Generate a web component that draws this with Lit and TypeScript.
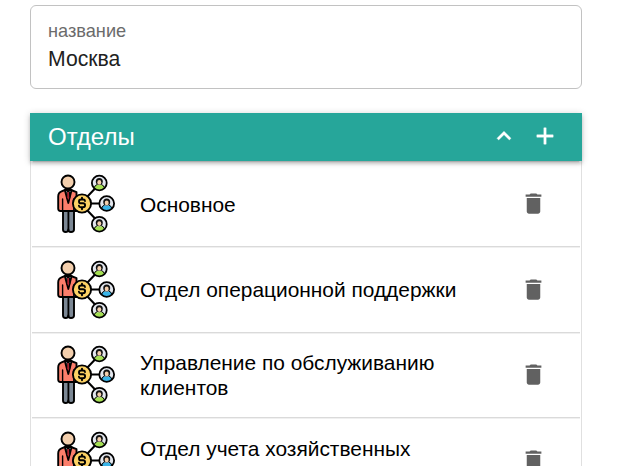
import { LitElement, html, css, svg } from "lit";
import { customElement, property } from "lit/decorators.js";

const contact = (x: number, y: number, shirt: string) => svg`
  <g transform="translate(${x} ${y})">
    <circle r="7.4" fill="#e3e7ee"/>
    <path d="M-5 5.2V4.6C-5 2.8-3.6 2.1-2 2.1H2C3.6 2.1 5 2.8 5 4.6V5.2A7.2 7.2 0 0 1-5 5.2Z" fill="${shirt}"/>
    <path d="M-4.9 4.2Q-4.4 2.2-2.4 1.6M4.9 4.2Q4.4 2.2 2.4 1.6" fill="none" stroke="#000" stroke-width="1"/>
    <circle cy="-1.4" r="3.5" fill="#111"/>
    <ellipse cy="-.6" rx="2" ry="2.4" fill="#f3cfad"/>
    <circle r="7.4" fill="none" stroke="#000" stroke-width="1.8"/>
  </g>`;

@customElement("department-icon")
export class DepartmentIcon extends LitElement {
  static styles = css`
    :host { display: block; width: 60px; height: 60px; }
    svg { display: block; }
  `;
  render() {
    return html`<svg width="60" height="60" viewBox="0 0 60 60" stroke-linejoin="round" stroke-linecap="round">
      <path d="M30 24L40 13.5M30 29.5H44M30 35L40 45.5" stroke="#000" stroke-width="2"/>
      <path d="M7 34H18V55.5Q18 58 15 58Q12.3 58 12.3 55.5Q12.3 58 9.6 58Q7 58 7 55.5Z" fill="#7b8794" stroke="#000" stroke-width="1.9"/>
      <path d="M12.4 38V56" stroke="#000" stroke-width="1.8"/>
      <path d="M9 16L5.5 17.3Q2.2 18.5 2.2 22.5V34.5Q2.2 37 4.5 37H20.5V18.2L15 16Z" fill="#fc7e6b" stroke="#000" stroke-width="1.9"/>
      <path d="M6.6 25V37M17.8 25V37" stroke="#000" stroke-width="1.4"/>
      <path d="M8.8 16H15.6L12.3 29Z" fill="#e7e8ed" stroke="#000" stroke-width="1.8"/>
      <path d="M11.2 17.5H13.4L13.8 24L12.3 27L10.9 24Z" fill="#a8202d" stroke="#000" stroke-width="1"/>
      <circle cx="12" cy="8" r="6.5" fill="#f3cfad" stroke="#000" stroke-width="1.9"/>
      <circle cx="26" cy="29.5" r="9.1" fill="#fdd264" stroke="#000" stroke-width="1.9"/>
      <path d="M29 27Q28.9 25.5 27.3 25.5H25Q23 25.5 23 27.4Q23 29.3 25 29.3H27Q29.1 29.3 29.1 31.3Q29.1 33.3 27 33.3H24.7Q23 33.3 22.9 31.7M26 23.6V25.3M26 33.5V35.2" fill="none" stroke="#000" stroke-width="1.9"/>
      ${contact(43.3, 9, "#a5e052")}
      ${contact(50.7, 29.5, "#39b4e8")}
      ${contact(43.3, 50.2, "#a5e052")}
    </svg>`;
  }
}

@customElement("department-row")
export class DepartmentRow extends LitElement {
  @property() name = "";
  @property({ type: Boolean }) tall = false;
  static styles = css`
    :host {
      display: flex;
      box-sizing: border-box;
      height: 85.5px;
      margin: 0 1px;
      padding: 0 33px 0 24px;
      align-items: center;
      border-bottom: 1px solid #dadada;
      box-shadow: 0 1px #f0f0f0;
    }
    .name {
      flex: 1;
      margin-left: 24px;
      padding: 0.8px 60px 0 0;
      font-size: 20.9px;
      line-height: 25px;
      color: #000;
    }
    :host([tall]) .name { min-height: 50px; }
    department-icon { margin-top: 0.8px; }
    .trash { display: block; fill: #616161; }
  `;
  render() {
    return html`
      <department-icon></department-icon>
      <div class="name">${this.name}</div>
      <svg class="trash" width="27" height="27" viewBox="0 0 24 24">
        <path d="M6 19c0 1.1.9 2 2 2h8c1.1 0 2-.9 2-2V7H6v12zM19 4h-3.5l-1-1h-5l-1 1H5v2h14V4z"/>
      </svg>`;
  }
}

@customElement("app-root")
export class AppRoot extends LitElement {
  private departments = [
    { name: "Основное", tall: false },
    { name: "Отдел операционной поддержки", tall: false },
    { name: "Управление по обслуживанию клиентов", tall: true },
    { name: "Отдел учета хозяйственных", tall: true },
  ];
  static styles = css`
    :host {
      display: block;
      box-sizing: border-box;
      height: 466px;
      padding: 5px 39px 0 30px;
      overflow: hidden;
      background: #fff;
      font-family: "Liberation Sans", Arial, sans-serif;
    }
    .field {
      box-sizing: border-box;
      height: 84px;
      padding: 13px 17px;
      border: 1px solid #c2c2c2;
      border-radius: 6px;
    }
    .label { font-size: 18.2px; line-height: 24px; color: #6b6b6b; }
    .value { margin-top: 1px; font-size: 21.2px; line-height: 30px; color: #212121; }
    .bar {
      display: flex;
      position: relative;
      box-sizing: border-box;
      height: 48px;
      margin-top: 24px;
      padding: 0 23px 0 18px;
      align-items: center;
      background: #26a69a;
      color: #fff;
      box-shadow: 0 1px 7px rgba(0, 0, 0, 0.2), 0 3px 3px rgba(0, 0, 0, 0.14), 0 4px 1px -3px rgba(0, 0, 0, 0.12);
    }
    .title { flex: 1; font-size: 24px; line-height: 32px; }
    .bar svg { display: block; margin-bottom: 2px; fill: #fff; stroke: #fff; stroke-width: 0.35; }
    .up { margin-right: 13px; }
    .list { padding-top: 0.6px; border: solid #e0e0e0; border-width: 0 1px; }
  `;
  render() {
    return html`
      <div class="field">
        <div class="label">название</div>
        <div class="value">Москва</div>
      </div>
      <div class="bar">
        <div class="title">Отделы</div>
        <svg class="up" width="28" height="28" viewBox="0 0 24 24"><path d="M7.41 15.41L12 10.83l4.59 4.58L18 14l-6-6-6 6z"/></svg>
        <svg width="28" height="28" viewBox="0 0 24 24"><path d="M19 13h-6v6h-2v-6H5v-2h6V5h2v6h6v2z"/></svg>
      </div>
      <div class="list">
        ${this.departments.map((d) => html`<department-row .name=${d.name} ?tall=${d.tall}></department-row>`)}
      </div>`;
  }
}
